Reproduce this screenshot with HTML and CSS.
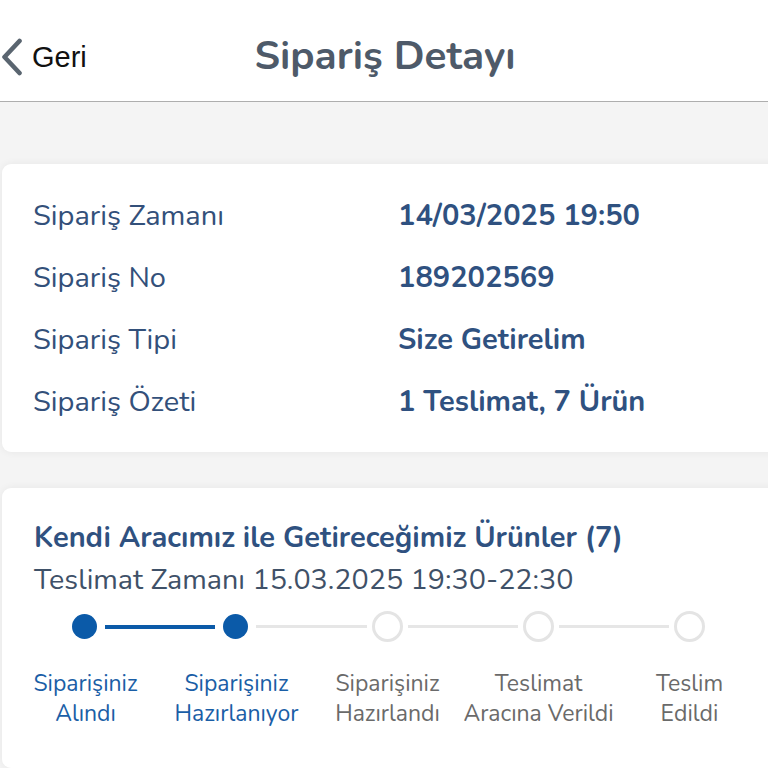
FILE: index.html
```html
<!DOCTYPE html>
<html lang="tr">
<head>
<meta charset="utf-8">
<link rel="stylesheet" href="styles.css">
</head>
<body>
<header class="topbar">
  <a class="back">
    <svg class="chev" width="24" height="38" viewBox="0 0 24 38"><path d="M19.5 3 L4.5 19 L19.5 35" fill="none" stroke="#5a6570" stroke-width="4.6" stroke-linecap="round" stroke-linejoin="round"/></svg>
    <span class="back-text">Geri</span>
  </a>
  <h1 class="title">Sipariş Detayı</h1>
</header>
<main class="content">
  <section class="card info">
    <div class="row"><span class="label">Sipariş Zamanı</span><span class="value">14/03/2025 19:50</span></div>
    <div class="row"><span class="label">Sipariş No</span><span class="value">189202569</span></div>
    <div class="row"><span class="label">Sipariş Tipi</span><span class="value">Size Getirelim</span></div>
    <div class="row"><span class="label">Sipariş Özeti</span><span class="value">1 Teslimat, 7 Ürün</span></div>
  </section>
  <section class="card delivery">
    <h2 class="d-title">Kendi Aracımız ile Getireceğimiz Ürünler (7)</h2>
    <p class="d-time">Teslimat Zamanı 15.03.2025 19:30-22:30</p>
    <div class="track">
      <span class="dot done"></span><span class="line done"></span>
      <span class="dot done"></span><span class="line"></span>
      <span class="dot"></span><span class="line"></span>
      <span class="dot"></span><span class="line"></span>
      <span class="dot"></span>
    </div>
    <div class="steps">
      <span class="step done">Siparişiniz<br>Alındı</span>
      <span class="step done">Siparişiniz<br>Hazırlanıyor</span>
      <span class="step">Siparişiniz<br>Hazırlandı</span>
      <span class="step">Teslimat<br>Aracına Verildi</span>
      <span class="step">Teslim<br>Edildi</span>
    </div>
  </section>
</main>
</body>
</html>
```
FILE: styles.css
```css
html, body { margin: 0; padding: 0; }
body {
  width: 768px;
  height: 768px;
  overflow: hidden;
  background: #f4f4f4;
  font-family: "Nunito", "Lato", "Noto Sans", sans-serif;
}
.topbar {
  height: 101px;
  background: #ffffff;
  border-bottom: 1px solid #aeaeae;
  display: flex;
  align-items: center;
  justify-content: center;
  position: relative;
}
.back {
  position: absolute;
  left: 0;
  top: 38px;
  display: flex;
  align-items: center;
  gap: 8px;
  color: #111;
}
.back-text {
  font-family: "Liberation Sans", Arial, sans-serif;
  font-size: 29px;
}
.title {
  margin: 10px 0 0 2px;
  font-size: 40.5px;
  font-weight: 700;
  color: #4e5a69;
}
.content {
  display: flex;
  flex-direction: column;
  gap: 36px;
  padding-top: 62px;
}
.card {
  background: #fff;
  margin-left: 2px;
  margin-right: -12px;
  border-radius: 9px;
  box-shadow: 0 0 8px rgba(0,0,0,0.06);
}
.info {
  padding: 20px 0 20px 31px;
}
.row {
  height: 62px;
  display: grid;
  grid-template-columns: 365px 1fr;
  align-items: center;
  font-size: 29px;
}
.label { color: #33507a; }
.value { color: #2f5180; font-weight: 700; }
.delivery {
  padding: 32px 0 0 0;
  height: 248px;
}
.d-title {
  margin: 0 0 0 32px;
  font-size: 29px;
  line-height: 36px;
  font-weight: 700;
  color: #2f5180;
}
.d-time {
  margin: 6px 0 0 32px;
  font-size: 28.7px;
  line-height: 36px;
  color: #3f5168;
}
.track {
  margin: 13px 0 0 67px;
  width: 636px;
  display: flex;
  align-items: center;
}
.dot {
  width: 31px;
  height: 31px;
  box-sizing: border-box;
  border: 3px solid #e4e4e4;
  border-radius: 50%;
  background: #fff;
  flex: none;
}
.dot.done {
  width: 25px;
  height: 25px;
  margin: 3px;
  border: none;
  background: #0b5aa8;
}
.line {
  flex: 1;
  height: 3px;
  margin: 0 5px;
  background: #e6e6e6;
}
.line.done {
  height: 4px;
  background: #0b5aa8;
}
.steps {
  margin: 27px 0 0 8px;
  display: grid;
  grid-template-columns: repeat(5, 151px);
}
.step {
  text-align: center;
  font-size: 23px;
  line-height: 30px;
  color: #6a6a6a;
}
.step.done { color: #1a5ea6; }
```
